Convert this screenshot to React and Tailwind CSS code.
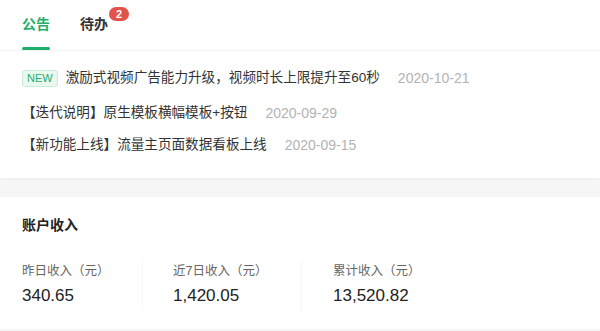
import React from "react";

const notices = [
    { tag: "NEW", text: "激励式视频广告能力升级，视频时长上限提升至60秒", date: "2020-10-21" },
    { text: "【迭代说明】原生模板横幅模板+按钮", date: "2020-09-29" },
    { text: "【新功能上线】流量主页面数据看板上线", date: "2020-09-15" },
];

const stats = [
    { label: "昨日收入（元）", value: "340.65" },
    { label: "近7日收入（元）", value: "1,420.05" },
    { label: "累计收入（元）", value: "13,520.82" },
];

const App = () => {
    return (
        <div
            className="w-[600px] h-[331px] bg-[#f6f6f6] overflow-hidden"
            style={{ fontFamily: '"Liberation Sans", "Noto Sans CJK SC", sans-serif' }}
        >
            {/* notices card */}
            <div className="bg-white h-[178px] shadow-[0_1px_3px_rgba(0,0,0,0.04)]">
                <div className="h-[51px] flex items-start gap-[30px] px-[22px] border-b border-[#f3f3f3]">
                    <div className="relative h-[50px] flex flex-col items-center">
                        <span className="mt-[14px] text-[14px] leading-[20px] font-bold text-[#1fae6b]">公告</span>
                        <span className="absolute bottom-0 left-0 right-0 h-[3px] rounded-full bg-[#1fae6b]"></span>
                    </div>
                    <div className="relative h-[50px]">
                        <span className="block mt-[14px] text-[14px] leading-[20px] font-bold text-[#333]">待办</span>
                        <span className="absolute top-[7px] left-[29px] h-[14px] min-w-[20px] px-[5px] rounded-full bg-[#e2534c] text-white text-[11px] leading-[14px] font-bold text-center">
                            2
                        </span>
                    </div>
                </div>
                <div className="px-[22px] pt-[11px]">
                    {notices.map((n, i) => (
                        <div
                            key={i}
                            className={`flex items-center h-[32px] ${i === 0 ? "mb-[3px]" : ""}`}
                        >
                            {n.tag && (
                                <span className="mr-[8px] h-[17px] px-[4px] rounded-[3px] border border-[#c8ecd9] bg-[#eaf8f0] text-[#1fae6b] text-[11px] leading-[15px]">
                                    {n.tag}
                                </span>
                            )}
                            <span className="text-[13.6px] text-[#333] whitespace-nowrap">{n.text}</span>
                            <span className="ml-[18px] text-[14px] text-[#b3b3b3] whitespace-nowrap">{n.date}</span>
                        </div>
                    ))}
                </div>
            </div>

            {/* income card */}
            <div className="mt-[19px] bg-white h-[132px]">
                <div className="px-[22px] pt-[18px] text-[14px] leading-[20px] font-bold text-[#222]">账户收入</div>
                <div className="flex px-[22px] mt-[25px]">
                    {stats.map((s, i) => (
                        <div
                            key={i}
                            className={`py-[2px] ${i === 0 ? "w-[121px] border-r border-[#f7f7f7]" : ""} ${i === 1 ? "w-[159px] pl-[30px] border-r border-[#f7f7f7]" : ""} ${i === 2 ? "pl-[31px]" : ""}`}
                        >
                            <div className="text-[12.5px] leading-[18px] text-[#666] whitespace-nowrap">{s.label}</div>
                            <div className="mt-[4px] text-[17px] leading-[24px] text-[#222]">{s.value}</div>
                        </div>
                    ))}
                </div>
            </div>
        </div>
    );
};

export default App;
